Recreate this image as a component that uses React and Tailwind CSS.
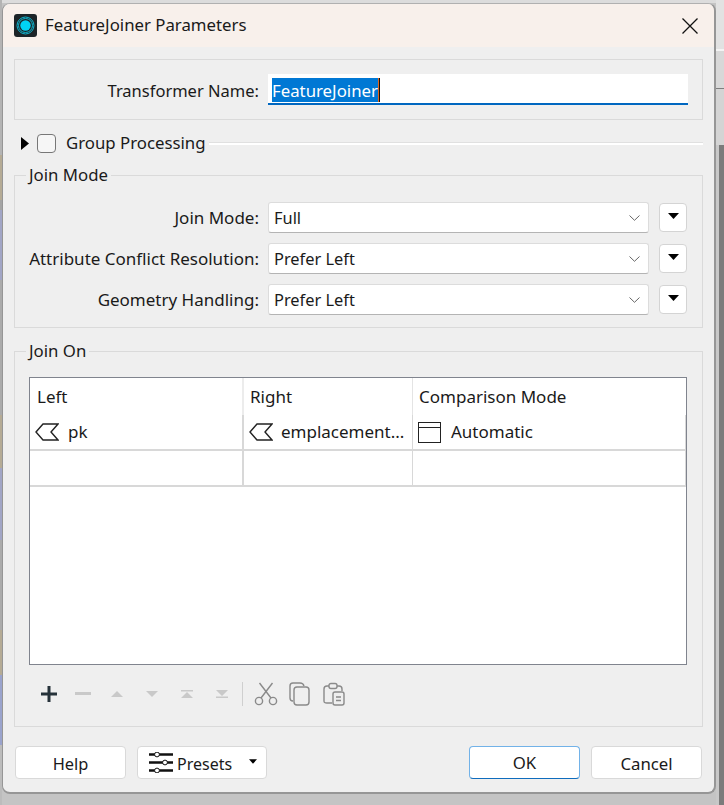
const FONT = { fontFamily: '"Noto Sans", sans-serif' };

// what shows of the desktop behind the dialog, left of it
const LEFT_STRIP = [
  "h-[155px] bg-[#b4b4b4]",
  "h-[45px] bg-[#b5ab95]",
  "h-[10px] bg-[#a4a4a4]",
  "h-[70px] bg-[#a2a6c6]",
  "h-[135px] bg-[#ababab]",
  "h-[53px] bg-[#b5ab95]",
  "h-[72px] bg-[#a2a6c6]",
  "h-[90px] bg-[#ababab]",
  "h-[45px] bg-[#b5ab95]",
  "h-[70px] bg-[#9aa3cc]",
  "flex-1 bg-[#bcbcbc]",
];

function Caret({ className = "" }) {
  return (
    <svg width="11" height="6" viewBox="0 0 11 6" className={className}>
      <path d="M0 0H11L5.5 6Z" fill="#000" />
    </svg>
  );
}

function FormRow({ label, value }) {
  return (
    <div className="flex items-center h-[31px]">
      <div className="w-[253px] pr-[9px] text-right whitespace-nowrap text-[17px]">{label}</div>
      <div className="w-[381px] h-[31px] bg-white border border-[#dcdcdc] border-b-[#b4b4b4] rounded-[3px] flex items-center justify-between pl-[5px] pr-[8px]">
        <span className="text-[16.4px] pt-[2px]">{value}</span>
        <svg width="11" height="6" viewBox="0 0 11 6" fill="none" stroke="#666" strokeWidth="1">
          <path d="M0.5 0.5L5.5 5.3L10.5 0.5" />
        </svg>
      </div>
      <div className="ml-[10px] w-[28px] h-[29px] bg-white border border-[#d4d4d4] rounded-[4px] flex items-center justify-center">
        <Caret className="mb-[3px]" />
      </div>
    </div>
  );
}

function AttrIcon() {
  return (
    <svg width="24" height="18" viewBox="0 0 24 18" fill="none" stroke="#222" strokeWidth="1.4" className="shrink-0">
      <path d="M1 9L8 1H23L16 9L23 17H8Z" />
    </svg>
  );
}

function Cell({ className = "", children }) {
  return <div className={`flex items-center overflow-hidden text-[17px] ${className}`}>{children}</div>;
}

function Tool({ d }) {
  return (
    <svg width="16" height="12" viewBox="0 0 16 12">
      <path d={d} fill="#c9c9c9" />
    </svg>
  );
}

function PushButton({ className = "", children }) {
  return (
    <button className={`h-[33px] w-[111px] bg-white border border-[#d9d9d9] rounded-[4px] flex items-center justify-center ${className}`}>
      {children}
    </button>
  );
}

export default function App() {
  return (
    <div style={FONT} className="w-[724px] h-[805px] overflow-hidden flex text-[16.8px] text-[#1a1a1a]">
      <div className="w-[2px] flex flex-col">
        {LEFT_STRIP.map((c, i) => (
          <div key={i} className={c} />
        ))}
      </div>

      <div className="w-[714px] flex flex-col bg-[#c4c4c4]">
        <div className="h-[3px] bg-[#dcdcdc]" />
        <div className="w-[714px] h-[791px] bg-[#efefef] border border-r-2 border-b-2 border-[#969696] border-t-[#b0b0b0] rounded-[8px] overflow-hidden flex flex-col">
          <div className="h-[43px] shrink-0 bg-[#f8f0eb] flex items-center pl-[11px] pr-[16px]">
            <svg width="23" height="23" viewBox="0 0 23 23">
              <rect width="23" height="23" rx="3" fill="#1c2428" />
              <circle cx="11.5" cy="11.5" r="8.5" fill="none" stroke="#0fb6cf" strokeWidth="1" />
              <circle cx="11.5" cy="11.5" r="7" fill="none" stroke="#0fb6cf" strokeWidth="1" />
              <circle cx="11.5" cy="11.5" r="5.2" fill="#00d4f5" />
            </svg>
            <span className="ml-[8px] pb-[1px]">FeatureJoiner Parameters</span>
            <svg width="16" height="16" viewBox="0 0 16 16" stroke="#111" strokeWidth="1.3" className="ml-auto">
              <path d="M0.5 0.5L15.5 15.5M15.5 0.5L0.5 15.5" />
            </svg>
          </div>

          <div className="flex-1 flex flex-col px-[11px] pt-[12px]">
            <div className="h-[61px] border border-[#dadada] flex items-center">
              <span className="w-[253px] pr-[9px] pt-[3px] text-right whitespace-nowrap text-[16.5px]">Transformer Name:</span>
              <div className="w-[420px] h-[31px] bg-white border-b-2 border-[#0067c0] flex items-center pl-[4px]">
                <span className="bg-[#0078d4] text-white h-[24px] leading-[26px] mt-[2px] border-r border-[#e0651c]">FeatureJoiner</span>
                <div className="w-px h-[24px] mt-[2px] bg-[#111]" />
              </div>
            </div>

            <div className="flex items-center mt-[11px] h-[24px] pl-[7px]">
              <svg width="8" height="13" viewBox="0 0 8 13"><path d="M0 0L8 6.5L0 13Z" fill="#000" /></svg>
              <div className="ml-[8px] w-[19px] h-[19px] bg-[#f6f6f6] border border-[#777] rounded-[4px]" />
              <span className="ml-[10px] whitespace-nowrap">Group Processing</span>
              <div className="flex-1 ml-[3px] h-[3px] mt-[1px] bg-white border-t border-[#e0e0e0]" />
            </div>

            <fieldset className="mt-[10px] border border-[#dadada] h-[163px]">
              <legend className="ml-[11px] px-[3px] leading-[20px]">Join Mode</legend>
              <div className="flex flex-col gap-[10px] pt-[17px]">
                <FormRow label="Join Mode:" value="Full" />
                <FormRow label="Attribute Conflict Resolution:" value="Prefer Left" />
                <FormRow label="Geometry Handling:" value="Prefer Left" />
              </div>
            </fieldset>

            <fieldset className="mt-[13px] border border-[#dadada] h-[386px]">
              <legend className="ml-[11px] px-[3px] leading-[20px]">Join On</legend>
              <div className="ml-[14px] mt-[16px] w-[658px] h-[288px] bg-white border border-[#80848e] flex flex-col">
                <div className="flex h-[37px]">
                  <Cell className="w-[214px] pl-[7px] border-r-2 border-[#ececec]">Left</Cell>
                  <Cell className="w-[169px] pl-[6px] border-r border-[#e4e4e4]">Right</Cell>
                  <Cell className="flex-1 pl-[6px]">Comparison Mode</Cell>
                </div>
                <div className="flex h-[36px] border-b-2 border-[#d8d8d8]">
                  <Cell className="w-[214px] pl-[5px] border-r-2 border-[#d8d8d8]">
                    <AttrIcon />
                    <span className="ml-[9px]">pk</span>
                  </Cell>
                  <Cell className="w-[169px] pl-[5px] border-r border-[#d8d8d8]">
                    <AttrIcon />
                    <span className="ml-[8px] whitespace-nowrap">emplacement...</span>
                  </Cell>
                  <Cell className="flex-1 pl-[5px] border-r border-[#d8d8d8]">
                    <div className="w-[23px] h-[21px] border border-[#222] flex flex-col">
                      <div className="h-[5px] border-b border-[#222]" />
                    </div>
                    <span className="ml-[10px]">Automatic</span>
                  </Cell>
                </div>
                <div className="flex h-[36px] border-b-2 border-[#d8d8d8]">
                  <div className="w-[214px] border-r-2 border-[#d8d8d8]" />
                  <div className="w-[169px] border-r border-[#d8d8d8]" />
                  <div className="flex-1 border-r border-[#d8d8d8]" />
                </div>
              </div>

              <div className="flex items-center h-[37px] mt-[10px] pl-[26px]">
                <svg width="16" height="16" viewBox="0 0 16 16">
                  <path d="M6.5 0H9.5V6.5H16V9.5H9.5V16H6.5V9.5H0V6.5H6.5Z" fill="#26323a" />
                </svg>
                <div className="ml-[18px] w-[16px] h-[3px] bg-[#c9c9c9]" />
                <div className="ml-[18px] flex gap-[19px]">
                  <Tool d="M8 3L14 9H2Z" />
                  <Tool d="M2 3H14L8 9Z" />
                  <Tool d="M2 2H14V3.5H2ZM8 4L14 10H2Z" />
                  <Tool d="M2 2H14L8 8ZM2 8.5H14V10H2Z" />
                </div>
                <div className="ml-[12px] w-px h-[24px] bg-[#cfcfcf]" />
                <svg className="ml-[11px]" width="24" height="24" viewBox="0 0 24 24" fill="none" stroke="#8a8a8a" strokeWidth="1.4">
                  <circle cx="5" cy="19" r="3.6" />
                  <circle cx="19" cy="19" r="3.6" />
                  <path d="M7 16L18.5 1M17 16L5.5 1" />
                </svg>
                <svg className="ml-[11px]" width="21" height="24" viewBox="0 0 21 24" fill="none" stroke="#8a8a8a" strokeWidth="1.4">
                  <path d="M4 19C2 19 1 18 1 16V4C1 2 2 1 4 1H11C13 1 14.5 2 15 4" />
                  <rect x="5" y="5" width="15" height="18" rx="3" />
                </svg>
                <svg className="ml-[13px]" width="22" height="24" viewBox="0 0 22 24" fill="none" stroke="#8a8a8a" strokeWidth="1.4">
                  <path d="M6 4H4C2 4 1 5 1 7V19C1 21 2 21 4 21H9" />
                  <path d="M14 4H16C18 4 19 5 19 7V9" />
                  <rect x="6" y="1.5" width="8" height="5" rx="2" />
                  <rect x="10" y="10" width="11" height="13" rx="2" />
                  <path d="M13 15H18M13 18.5H18" />
                </svg>
              </div>
            </fieldset>

            <div className="flex items-center mt-[19px] px-px">
              <PushButton className="text-[16.4px] pt-[3px]">Help</PushButton>
              <PushButton className="ml-[11px] w-[130px] pl-[11px] pr-[9px] !justify-start text-[16px]">
                <svg width="24" height="21" viewBox="0 0 24 21" fill="none">
                  <path d="M0 2.5H24M0 10.5H24M0 18.5H24" stroke="#111" strokeWidth="2.6" />
                  <circle cx="8" cy="2.5" r="2.4" fill="#fff" stroke="#111" />
                  <circle cx="16" cy="10.5" r="2.4" fill="#fff" stroke="#111" />
                  <circle cx="8" cy="18.5" r="2.4" fill="#fff" stroke="#111" />
                </svg>
                <span className="ml-[4px] pt-[2px]">Presets</span>
                <Caret className="ml-auto w-[8px] h-[5px] mb-[3px]" />
              </PushButton>
              <PushButton className="ml-auto pt-[1px] !border-[#0f6cbd] !border-t-[#72b2e8] !border-x-[#72b2e8]">OK</PushButton>
              <PushButton className="ml-[11px] pt-[2px]">Cancel</PushButton>
            </div>
          </div>
        </div>
        <div className="flex-1 bg-[#c4c4c4]" />
      </div>

      <div className="w-[8px] flex flex-col">
        <div className="h-[49px] bg-[#e2e2e2]" />
        <div className="h-[2px] bg-[#f4f4f4]" />
        <div className="h-[37px] bg-[#d8d8d8]" />
        <div className="h-px bg-[#7e7e7e]" />
        <div className="h-[56px] bg-[#d4d4d4]" />
        <div className="flex-1 flex">
          <div className="w-[3px] bg-[#c8c8c8]" />
          <div className="flex-1 bg-[#7b7b7b]" />
        </div>
      </div>
    </div>
  );
}
